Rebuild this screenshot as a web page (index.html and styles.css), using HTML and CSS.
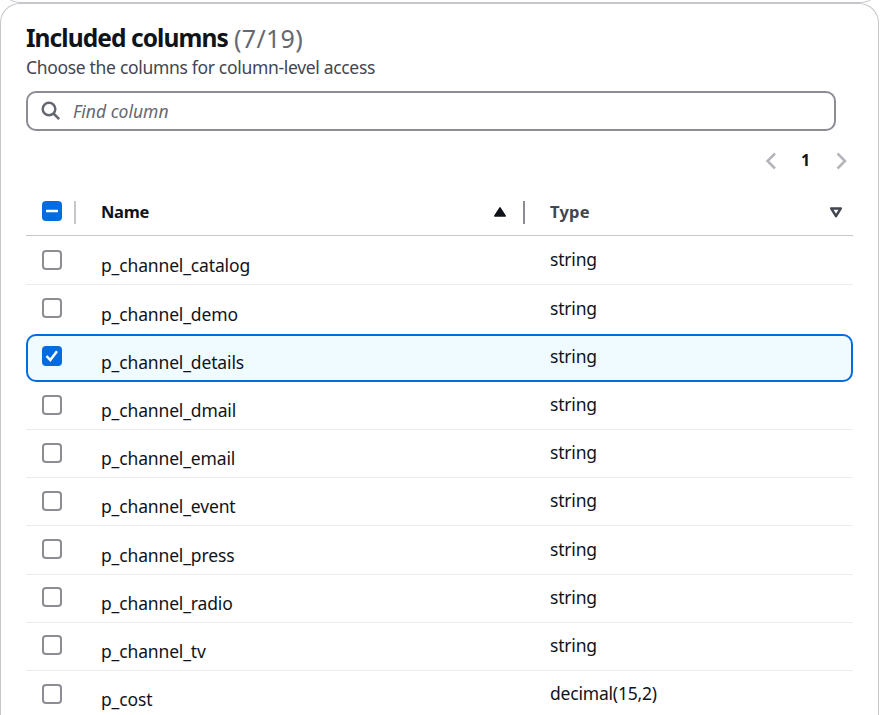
FILE: index.html
```html
<!DOCTYPE html>
<html lang="en">
<head>
<meta charset="utf-8">
<title>Included columns</title>
<link rel="stylesheet" href="styles.css">
</head>
<body>
<div class="previous-card"></div>
<main class="card">
  <header class="header">
    <h2 class="title">Included columns</h2><span class="count">(7/19)</span>
  </header>
  <p class="description">Choose the columns for column-level access</p>
  <div class="search">
    <svg class="search-icon" viewBox="0 0 20 20"><circle cx="8" cy="8" r="6.3"/><path d="M12.5 12.5 18.2 18.2"/></svg>
    <span class="placeholder">Find column</span>
  </div>
  <nav class="pagination">
    <svg class="chevron" viewBox="0 0 12 18"><path d="M10 1.5 2.5 9l7.5 7.5"/></svg>
    <span class="page">1</span>
    <svg class="chevron" viewBox="0 0 12 18"><path d="m1.5 1.5 7.5 7.5-7.5 7.5"/></svg>
  </nav>
  <section class="table">
    <div class="head">
      <span class="box filled"><svg viewBox="0 0 20 20"><path d="M4 10h12"/></svg></span>
      <span class="divider light"></span>
      <span class="label">Name</span>
      <svg class="sort" viewBox="0 0 14 12"><path class="solid" d="M7 1.8 12.2 10H1.8Z"/></svg>
      <span class="divider"></span>
      <span class="label muted">Type</span>
      <svg class="sort last" viewBox="0 0 14 12"><path class="hollow" d="M2.2 2.4h9.6L7 10.2Z"/></svg>
    </div>
    <div class="row"><span class="box"></span><span class="name">p_channel_catalog</span><span class="type">string</span></div>
    <div class="row before-selected"><span class="box"></span><span class="name">p_channel_demo</span><span class="type">string</span></div>
    <div class="row selected"><span class="box filled"><svg viewBox="0 0 20 20"><path d="m4.5 10 3.8 4L15 5.3"/></svg></span><span class="name">p_channel_details</span><span class="type">string</span></div>
    <div class="row"><span class="box"></span><span class="name">p_channel_dmail</span><span class="type">string</span></div>
    <div class="row"><span class="box"></span><span class="name">p_channel_email</span><span class="type">string</span></div>
    <div class="row"><span class="box"></span><span class="name">p_channel_event</span><span class="type">string</span></div>
    <div class="row"><span class="box"></span><span class="name">p_channel_press</span><span class="type">string</span></div>
    <div class="row"><span class="box"></span><span class="name">p_channel_radio</span><span class="type">string</span></div>
    <div class="row"><span class="box"></span><span class="name">p_channel_tv</span><span class="type">string</span></div>
    <div class="row"><span class="box"></span><span class="name">p_cost</span><span class="type">decimal(15,2)</span></div>
  </section>
</main>
</body>
</html>
```
FILE: styles.css
```css
* { box-sizing: border-box; }
html, body { height: 100%; overflow: hidden; }
body { margin: 0; background: #fff; color: #0f141a; font: 17.5px/25px "Noto Sans", sans-serif; display: flex; flex-direction: column; }
svg { display: block; fill: none; }
.previous-card { flex: none; width: 879px; height: 3px; overflow: hidden; display: flex; align-items: flex-end; }
.previous-card::after { content: ""; flex: none; width: 879px; height: 60px; border: 1px solid #c6c6cd; border-radius: 20px; }
.card { flex: none; width: 879px; height: 712px; overflow: hidden; border: 1px solid #c6c6cd; border-bottom: 0; border-radius: 20px 20px 0 0; padding: 17px 25px 0; }
.header { display: flex; height: 34px; line-height: 34px; font-size: 25px; }
.title { margin: 0; width: 208px; font-size: 24.5px; font-weight: 700; letter-spacing: -0.92px; white-space: nowrap; }
.count { color: #656871; letter-spacing: 0.3px; }
.description { margin: 0; color: #424650; letter-spacing: -0.32px; white-space: nowrap; }
.search { margin-top: 11px; width: 810px; height: 40px; border: 2px solid #8c8c94; border-radius: 10px; display: flex; align-items: center; padding-left: 13px; }
.search-icon { width: 20px; height: 20px; stroke: #656871; stroke-width: 2.5; margin-right: 12px; }
.placeholder { color: #656871; font-style: italic; line-height: 24px; margin-bottom: 1px; }
.pagination { display: flex; justify-content: flex-end; align-items: center; height: 24px; margin-top: 18px; padding-right: 5px; }
.chevron { width: 12px; height: 18px; stroke: #b4b4bb; stroke-width: 2.5; }
.page { width: 59px; padding-right: 2px; margin-top: -2px; text-align: center; font-weight: 700; font-size: 16px; }
.table { width: 827px; margin-top: 16px; }
.head { height: 47px; margin-bottom: 1.3px; border-bottom: 1px solid #c6c6cd; display: flex; align-items: center; padding-left: 16px; }
.box { flex: none; width: 20px; height: 20px; border: 2px solid #8c8c94; border-radius: 4px; background: #fff; }
.box.filled { border: 0; background: #006ce0; }
.box svg { width: 20px; height: 20px; stroke: #fff; stroke-width: 2.5; }
.head .box { margin-bottom: 3px; }
.divider { width: 2px; height: 23px; background: #8c8c94; margin-right: 25px; }
.divider.light { background: #c6c6cd; margin-left: 12px; }
.label { width: 392px; font-weight: 700; font-size: 16.5px; letter-spacing: -0.3px; margin-bottom: 1px; }
.label.muted { width: 279px; color: #424650; letter-spacing: 0.2px; }
.sort { width: 14px; height: 12px; margin-right: 16px; }
.sort.last { margin: 0; }
.solid { fill: #0f141a; stroke: #0f141a; stroke-width: 1.5; stroke-linejoin: round; }
.hollow { stroke: #424650; stroke-width: 2.5; stroke-linejoin: round; }
.row { height: 48.2px; border-bottom: 1px solid #ebebf0; display: grid; grid-template-columns: 59px 449px 1fr; padding: 10.2px 0 0 16px; align-items: start; letter-spacing: -0.15px; }
.row .box { margin-top: 2.5px; }
.row.before-selected { border-bottom-color: transparent; }
.row.selected { border: 2px solid #006ce0; border-radius: 10px; background: #f0fbff; padding: 8.2px 0 0 14px; }
.name { padding-top: 6px; }
.type { letter-spacing: -0.2px; }
```
